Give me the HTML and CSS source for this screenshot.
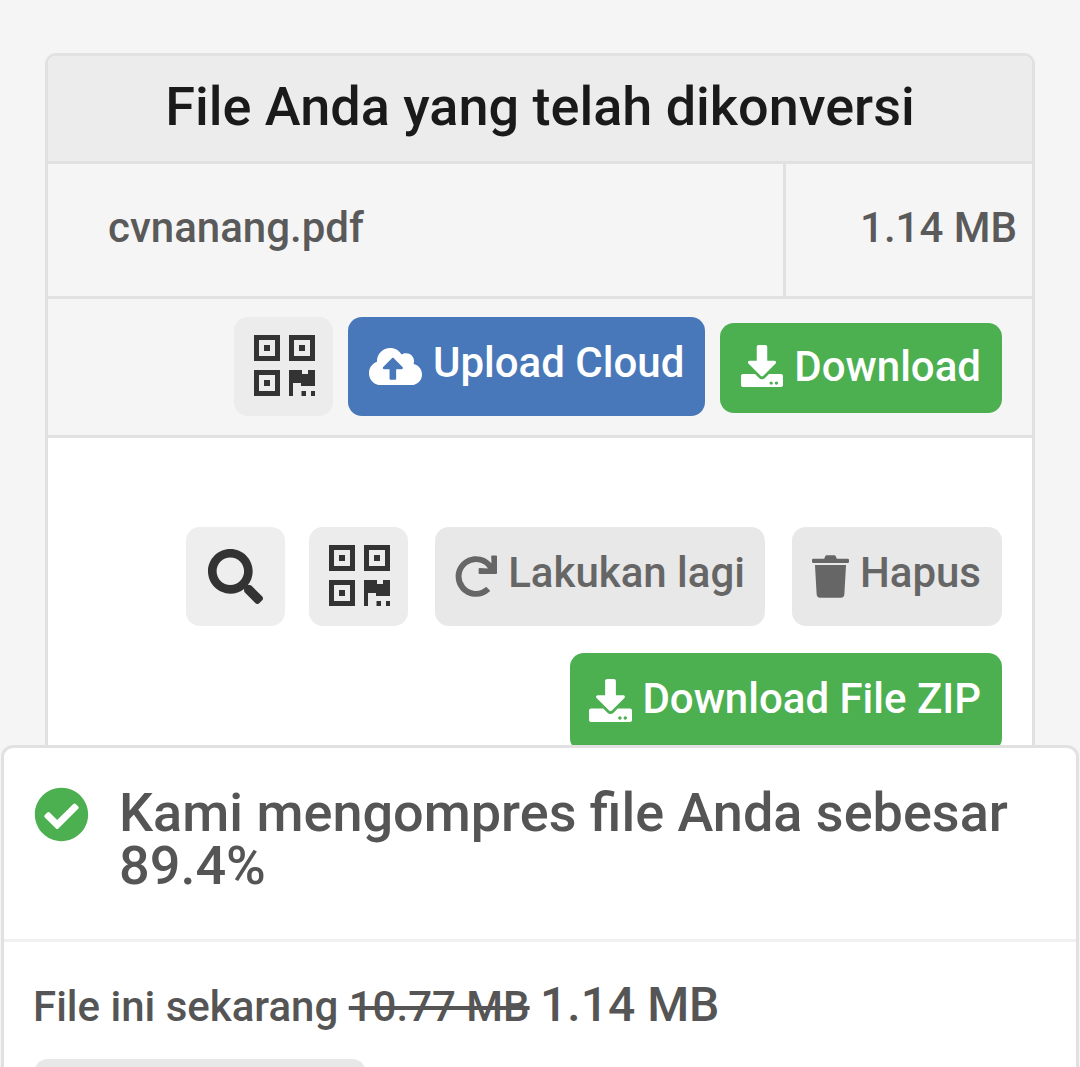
FILE: index.html
```html
<!DOCTYPE html>
<html lang="id">
<head>
<meta charset="utf-8">
<title>File Anda yang telah dikonversi</title>
<link rel="stylesheet" href="styles.css">
</head>
<body>
<svg class="defs" width="0" height="0" aria-hidden="true">
  <defs>
    <symbol id="i-qr" viewBox="0 0 61 61">
      <path fill-rule="evenodd" d="M0 0h26v26H0zM5 5v16h16V5zM10 10h6v6h-6zM35 0h26v26H35zM40 5v16h16V5zM45 10h6v6h-6zM0 35h26v26H0zM5 40v16h16V40zM10 45h6v6h-6z"/>
      <path d="M35 35h13v4h6v-4h7v16H47v-3h-8v13h-4zM47.500 56h4.500v5h-4.500zM57 56h4v5h-4z"/>
    </symbol>
    <symbol id="i-dl" viewBox="0 0 512 512">
      <path d="M216 0h80c13.300 0 24 10.700 24 24v168h87.700c17.800 0 26.700 21.500 14.100 34.100L269.700 378.300c-7.500 7.500-19.800 7.500-27.300 0L90.100 226.100c-12.600-12.600-3.700-34.100 14.100-34.100H192V24c0-13.300 10.700-24 24-24zm296 376v112c0 13.300-10.700 24-24 24H24c-13.300 0-24-10.700-24-24V376c0-13.300 10.700-24 24-24h146.700l49 49c20.100 20.100 52.500 20.100 72.600 0l49-49H488c13.300 0 24 10.700 24 24zm-124 88c0-11-9-20-20-20s-20 9-20 20 9 20 20 20 20-9 20-20zm64 0c0-11-9-20-20-20s-20 9-20 20 9 20 20 20 20-9 20-20z"/>
    </symbol>
  </defs>
</svg>

<main class="panel">
  <h1 class="panel-title">File Anda yang telah dikonversi</h1>
  <div class="file-row">
    <div class="file-name">cvnanang.pdf</div>
    <div class="file-size">1.14 MB</div>
  </div>
  <div class="file-actions">
    <button class="btn btn-square btn-light btn-qr"><svg class="ic-qr"><use href="#i-qr"/></svg></button>
    <button class="btn btn-blue">
      <svg class="ic-cloud" viewBox="0 0 640 512"><path d="M537.600 226.600c4.100-10.700 6.400-22.400 6.400-34.600 0-53-43-96-96-96-19.700 0-38.100 6-53.300 16.200C367 64.200 315.300 32 256 32c-88.400 0-160 71.600-160 160 0 2.700.1 5.400.2 8.100C40.200 219.800 0 273.200 0 336c0 79.500 64.500 144 144 144h368c70.700 0 128-57.300 128-128 0-61.900-44-113.600-102.400-125.400zM393.400 288H328v112c0 8.800-7.200 16-16 16h-48c-8.800 0-16-7.200-16-16V288h-65.400c-14.300 0-21.400-17.200-11.300-27.300l105.400-105.400c6.200-6.200 16.400-6.200 22.600 0l105.400 105.400c10.100 10.100 2.900 27.300-11.300 27.300z"/></svg>
      Upload Cloud
    </button>
    <button class="btn btn-green btn-short"><svg class="ic-dl"><use href="#i-dl"/></svg> Download</button>
  </div>
  <div class="all-actions">
    <div class="tool-row">
      <button class="btn btn-square btn-light btn-search">
        <svg class="ic-search" viewBox="0 0 512 512"><path d="M505 442.700L405.300 343c-4.500-4.500-10.600-7-17-7H372c27.600-35.300 44-79.700 44-128C416 93.100 322.900 0 208 0S0 93.100 0 208s93.100 208 208 208c48.300 0 92.700-16.400 128-44v16.300c0 6.400 2.500 12.500 7 17l99.700 99.700c9.400 9.400 24.600 9.400 33.900 0l28.300-28.300c9.400-9.400 9.400-24.600.1-34zM208 336c-70.700 0-128-57.200-128-128 0-70.700 57.200-128 128-128 70.700 0 128 57.200 128 128 0 70.700-57.200 128-128 128z"/></svg>
      </button>
      <button class="btn btn-square btn-light btn-qr"><svg class="ic-qr"><use href="#i-qr"/></svg></button>
      <button class="btn btn-grey btn-redo">
        <svg class="ic-redo" viewBox="0 0 512 512"><path d="M500.330 0h-47.410a12 12 0 0 0-12 12.570l4 82.760A247.420 247.420 0 0 0 256 8C119.340 8 7.900 119.530 8 256.190 8.100 393.070 119.100 504 256 504a247.100 247.100 0 0 0 166.180-63.910 12 12 0 0 0 .48-17.430l-34-34a12 12 0 0 0-16.380-.55A176 176 0 1 1 402.100 157.800l-101.530-4.870a12 12 0 0 0-12.570 12v47.410a12 12 0 0 0 12 12h200.330a12 12 0 0 0 12-12V12a12 12 0 0 0-12-12z"/></svg>
        Lakukan lagi
      </button>
      <button class="btn btn-grey btn-trash">
        <svg class="ic-trash" viewBox="0 0 448 512"><path d="M432 40H300l-10-24a24 24 0 0 0-22-16H180a24 24 0 0 0-22 16L148 40H16A16 16 0 0 0 0 56v20a16 16 0 0 0 16 16h416a16 16 0 0 0 16-16V56a16 16 0 0 0-16-16zM36 116l20 352a44 44 0 0 0 44 44h248a44 44 0 0 0 44-44l20-352z"/></svg>
        Hapus
      </button>
    </div>
    <button class="btn btn-green btn-zip"><svg class="ic-dl"><use href="#i-dl"/></svg> Download File ZIP</button>
  </div>
</main>

<aside class="sheet">
  <div class="sheet-head">
    <svg class="ic-check" viewBox="0 0 512 512"><path d="M504 256c0 136.967-111.033 248-248 248S8 392.967 8 256 119.033 8 256 8s248 111.033 248 248zM227.314 387.314l184-184c6.248-6.248 6.248-16.379 0-22.627l-22.627-22.627c-6.248-6.249-16.379-6.249-22.628 0L216 308.118l-70.059-70.059c-6.248-6.248-16.379-6.248-22.628 0l-22.627 22.627c-6.248 6.248-6.248 16.379 0 22.627l104 104c6.249 6.249 16.379 6.249 22.628.001z"/></svg>
    <h2 class="sheet-title">Kami mengompres file Anda sebesar 89.4%</h2>
  </div>
  <div class="sheet-body">
    <p class="sheet-text">File ini sekarang <s class="old-size">10.77 MB</s> <span class="new-size">1.14 MB</span></p>
    <div class="sheet-btn"></div>
  </div>
</aside>
</body>
</html>
```
FILE: styles.css
```css
* { box-sizing: border-box; }
html, body { height: 100%; margin: 0; overflow: hidden; }
body {
  background: #f5f5f5;
  font-family: Roboto, "Liberation Sans", sans-serif;
  padding: 53px 45px 0;
}
.defs { position: absolute; }
svg { fill: currentColor; display: block; flex: none; }

.panel {
  width: 990px;
  border: 3px solid #e1e1e1;
  border-bottom: 0;
  border-radius: 11px 11px 0 0;
  background: #fff;
  overflow: hidden;
}
.panel-title {
  margin: 0;
  height: 108px;
  padding-bottom: 4px;
  display: flex;
  align-items: center;
  justify-content: center;
  background: #ececec;
  border-bottom: 3px solid #e1e1e1;
  color: #1a1a1a;
  font-size: 54px;
  font-weight: 500;
}
.file-row {
  display: flex;
  height: 135px;
  background: #f5f5f5;
  border-bottom: 3px solid #e1e1e1;
  color: #5a5a5a;
  font-size: 42px;
  font-weight: 500;
}
.file-name {
  width: 738px;
  padding-left: 60px;
  padding-bottom: 5px;
  display: flex;
  align-items: center;
  border-right: 3px solid #e1e1e1;
}
.file-size {
  flex: 1;
  display: flex;
  align-items: center;
  justify-content: flex-end;
  padding-right: 15px;
  padding-bottom: 5px;
}
.file-actions {
  height: 139px;
  padding: 18px 30px 0 0;
  display: flex;
  justify-content: flex-end;
  align-items: flex-start;
  gap: 15px;
  background: #f5f5f5;
  border-bottom: 3px solid #e1e1e1;
}
.all-actions {
  padding: 89px 30px 0 0;
  height: 400px;
  display: flex;
  flex-direction: column;
  align-items: flex-end;
  gap: 27px;
}
.tool-row { display: flex; gap: 27px; }

.btn {
  height: 99px;
  border: 0;
  border-radius: 14px;
  padding: 0 21px;
  display: flex;
  align-items: center;
  gap: 11px;
  font-family: inherit;
  font-size: 42px;
  font-weight: 500;
}
.btn-square {
  width: 99px;
  padding: 0;
  justify-content: center;
  color: #333;
}
.btn-light { background: #ececec; }
.btn-search { background: #eee; margin-right: -3px; }
.btn-qr { padding: 0 0 2px 2px; }
.btn-blue { background: #4878b9; color: #fff; padding-bottom: 8px; }
.btn-green { background: #4caf50; color: #fff; }
.btn-short { height: 90px; margin-top: 6px; padding: 0 21px 4px 21px; }
.btn-grey { background: #e8e8e8; color: #666; padding-bottom: 8px; }
.btn-redo { padding-left: 20px; padding-right: 20px; }
.btn-trash { padding-left: 20px; }
.btn-zip { padding: 0 21px 8px 19px; gap: 10px; }

.ic-qr { width: 61px; height: 61px; }
.ic-cloud { width: 53px; height: 43px; margin-top: 8px; }
.ic-dl { width: 43px; height: 43px; margin-top: 4px; }
.btn-short .ic-dl { width: 42px; height: 42px; margin-top: 0; }
.ic-search { width: 55px; height: 55px; }
.ic-redo { width: 42px; height: 43px; margin-top: 8px; }
.ic-trash { width: 37px; height: 43px; margin-top: 8px; }

.sheet {
  position: fixed;
  left: 1px;
  right: 1px;
  top: 745px;
  bottom: -40px;
  background: #fff;
  border: 3px solid #e1e1e1;
  border-radius: 12px 12px 0 0;
  color: #555;
}
.sheet-head {
  height: 194px;
  padding: 39px 30px 0;
  display: flex;
  align-items: flex-start;
  gap: 30px;
  border-bottom: 3px solid #f0f0f0;
}
.ic-check { width: 55px; height: 55px; color: #4caf50; }
.sheet-title {
  margin: -1px 0 0;
  font-size: 54px;
  line-height: 53px;
  font-weight: 500;
}
.sheet-body { padding: 37px 30px 0 29px; }
.sheet-text {
  margin: 0;
  font-size: 42px;
  line-height: 52px;
  font-weight: 500;
}
.new-size { font-size: 48px; }
.sheet-btn {
  width: 332px;
  height: 60px;
  margin: 26px 0 0 1px;
  background: #e8e8e8;
  border-radius: 14px;
}
```
